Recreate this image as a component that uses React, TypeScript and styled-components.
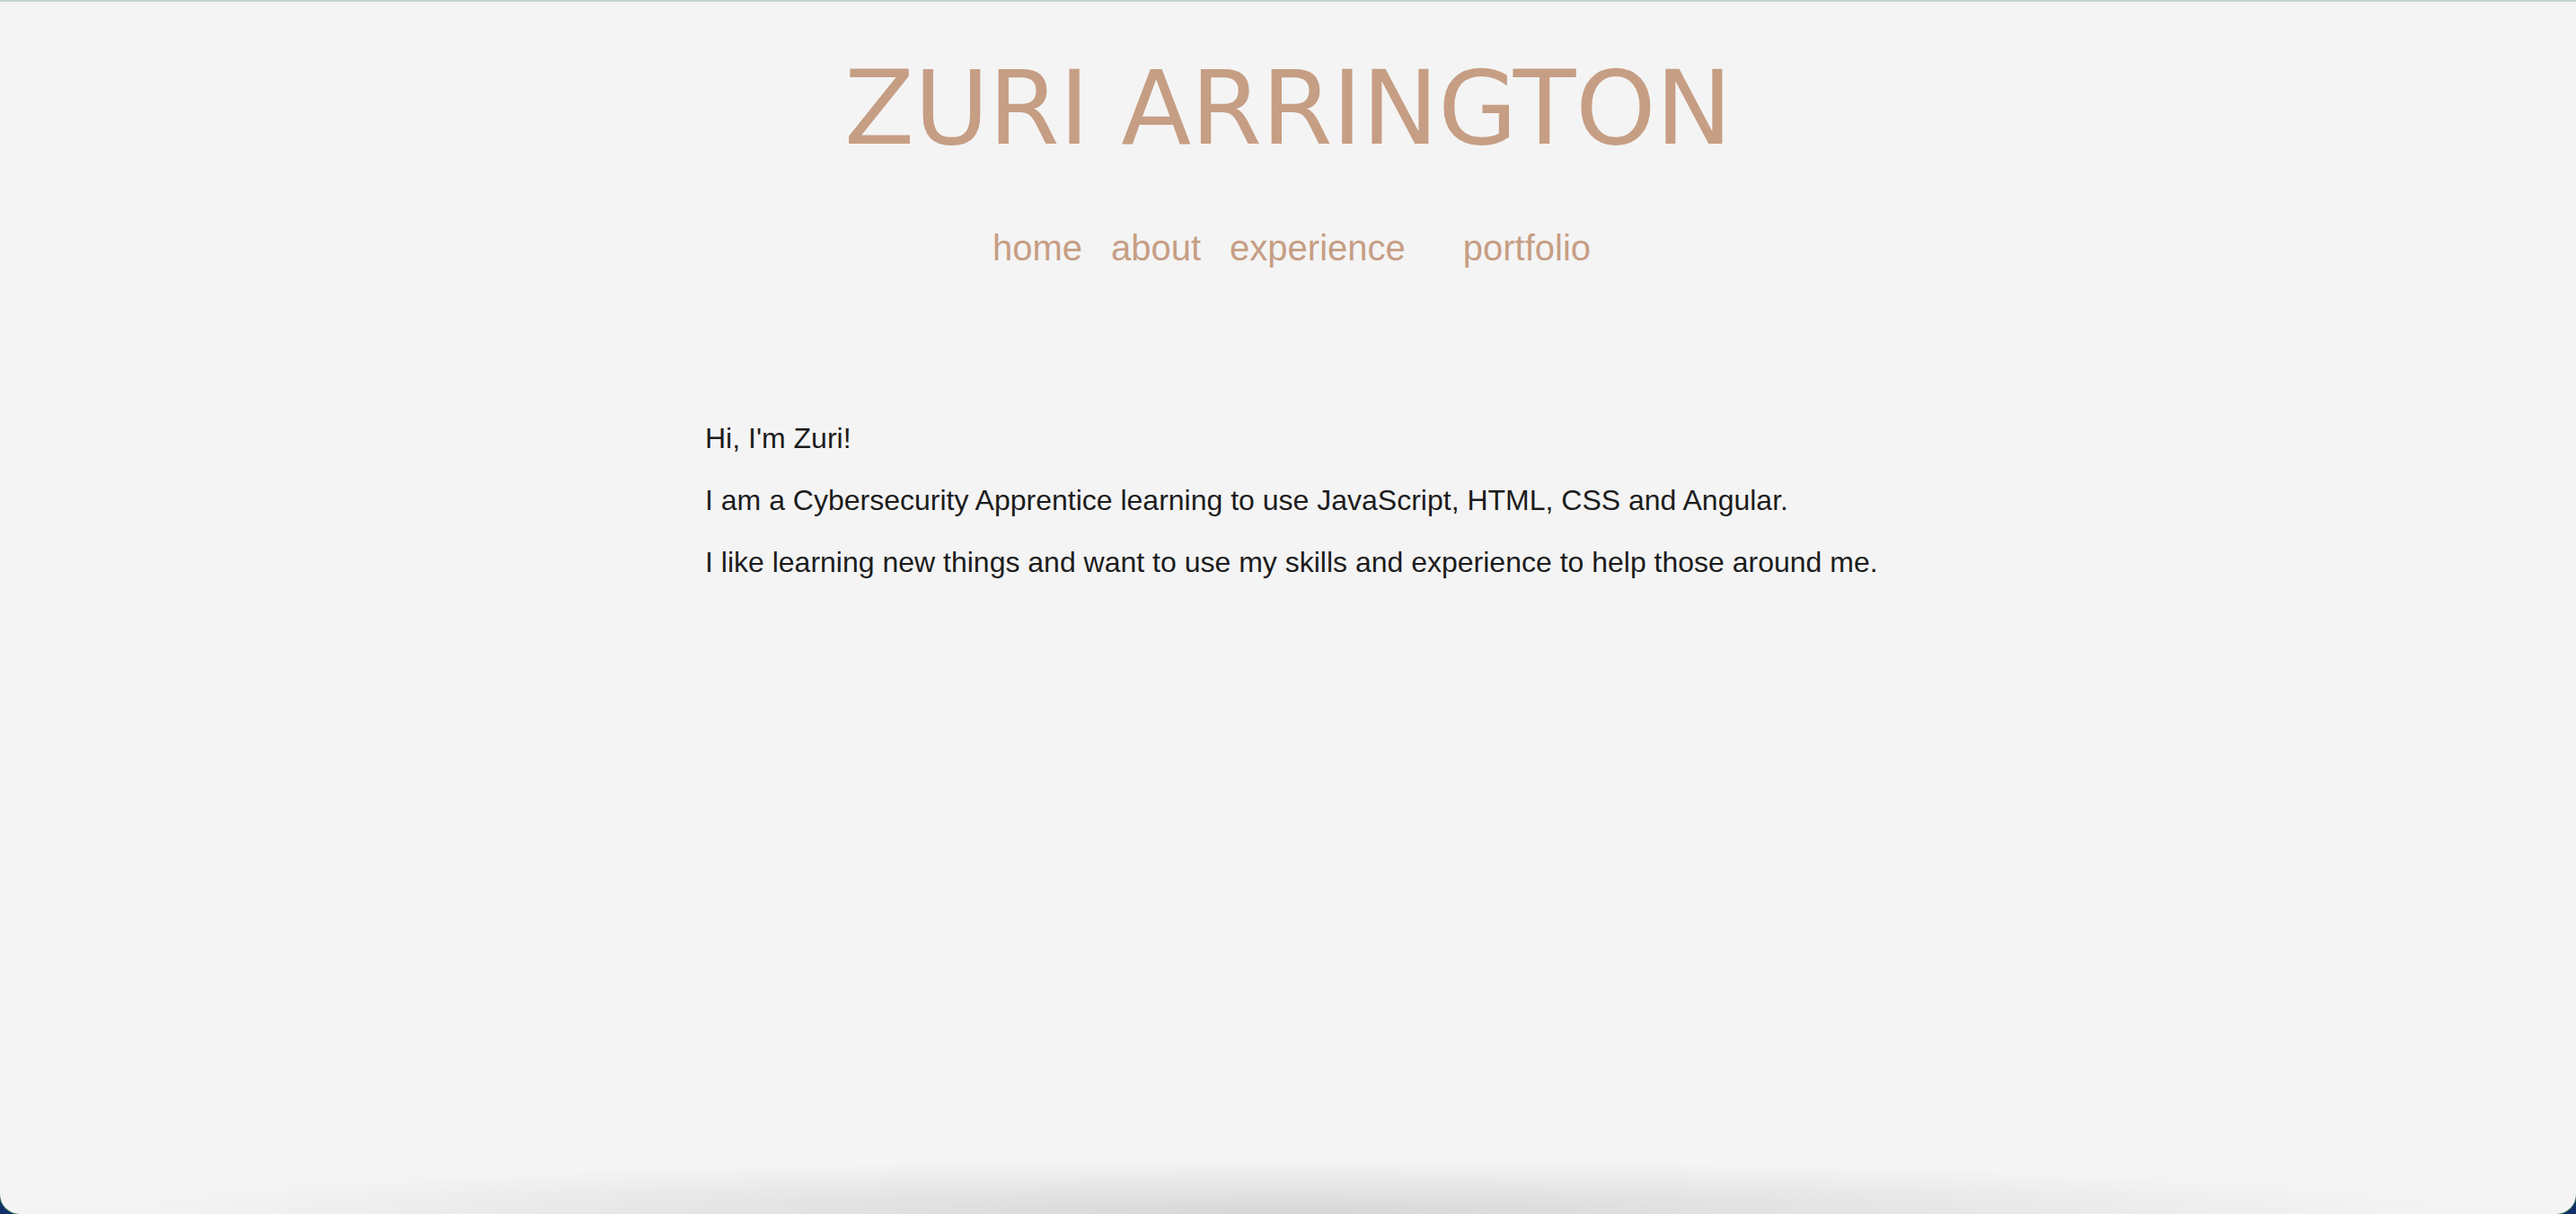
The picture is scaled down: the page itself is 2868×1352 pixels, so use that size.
import { FC } from 'react';
import styled, { createGlobalStyle } from 'styled-components';

const GlobalStyle = createGlobalStyle`
    html, body {
        margin: 0;
        padding: 0;
        background: #12306a;
    }
`;

const Window = styled.div`
    position: relative;
    box-sizing: border-box;
    height: 1352px;
    overflow: hidden;
    border-top: 2px solid #c3d7cb;
    border-radius: 0 0 22px 22px;
    box-shadow: 0 0 0 1px #2e6a4e;
    background:
        radial-gradient(ellipse 46% 60px at 50% 100%, rgba(0, 0, 0, 0.12), rgba(0, 0, 0, 0) 100%),
        #f4f4f4;
    font-family: 'Liberation Sans', Arial, Helvetica, sans-serif;
`;

const Header = styled.header`
    display: flex;
    flex-direction: column;
    align-items: center;
`;

const Title = styled.h1`
    margin: 53px 0 0 0;
    font-family: 'DejaVu Sans', Verdana, sans-serif;
    font-weight: normal;
    font-size: 114px;
    line-height: 132px;
    color: #c69e84;
    letter-spacing: -0.5px;
`;

const Nav = styled.nav`
    display: flex;
    gap: 32px;
    margin-top: 66px;
    padding-left: 8px;
`;

const NavLink = styled.a<{ $extraGap?: boolean }>`
    font-size: 40px;
    line-height: 46px;
    color: #c69e84;
    text-decoration: none;
    margin-left: ${(p) => (p.$extraGap ? '32px' : '0')};
`;

const About = styled.main`
    padding-left: 785px;
    margin-top: 171px;
`;

const Text = styled.p`
    margin: 32px 0;
    font-size: 32px;
    line-height: 37px;
    color: #1c1c1c;
`;

const App: FC = () => {
    return (
        <>
            <GlobalStyle />
            <Window>
                <Header>
                    <Title>ZURI ARRINGTON</Title>
                    <Nav>
                        <NavLink href="#">home</NavLink>
                        <NavLink href="#">about</NavLink>
                        <NavLink href="#">experience</NavLink>
                        <NavLink href="#" $extraGap>portfolio</NavLink>
                    </Nav>
                </Header>
                <About>
                    <Text>Hi, I'm Zuri!</Text>
                    <Text>I am a Cybersecurity Apprentice learning to use JavaScript, HTML, CSS and Angular.</Text>
                    <Text>I like learning new things and want to use my skills and experience to help those around me.</Text>
                </About>
            </Window>
        </>
    );
};

export default App;
